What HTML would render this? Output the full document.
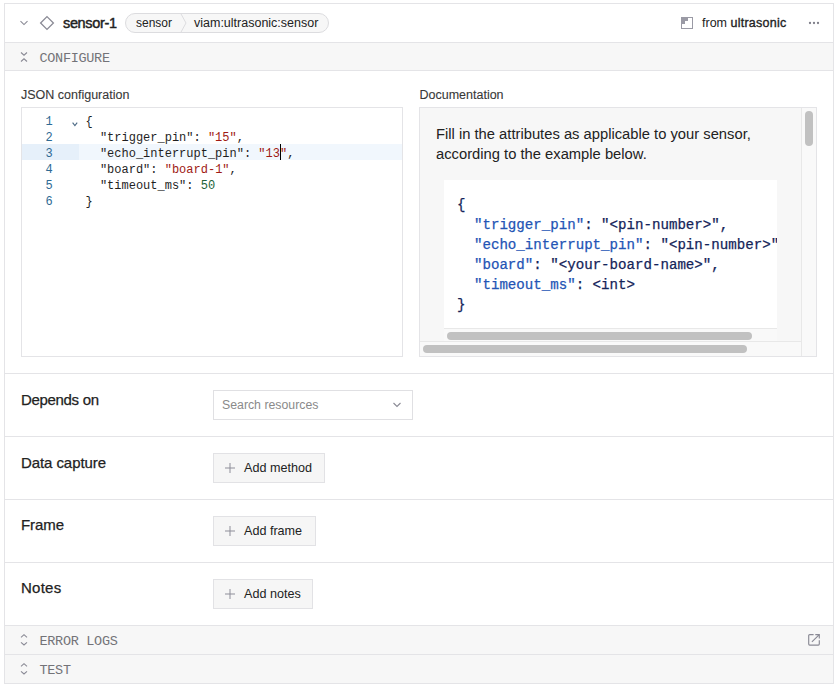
<!DOCTYPE html>
<html><head><meta charset="utf-8">
<style>
*{box-sizing:border-box;margin:0;padding:0}
html,body{width:839px;height:687px;background:#fff;overflow:hidden}
body{position:relative;font-family:"Liberation Sans",sans-serif;color:#1f1f1f}
.abs{position:absolute}
.frame{position:absolute;left:4px;top:3px;width:830px;height:681px;border:1px solid #e4e4e7;background:#fff}
.hline{position:absolute;left:4px;width:830px;height:1px;background:#e4e4e7}
.bar{position:absolute;left:5px;width:828px;background:#f7f7f7}
.mono{font-family:"Liberation Mono",monospace}
.t{position:absolute;white-space:pre;line-height:1}
.barlabel{position:absolute;left:39.5px;font-family:"Liberation Mono",monospace;font-size:13.5px;color:#737378;letter-spacing:-0.3px;white-space:pre;line-height:1}
.btn{position:absolute;left:213px;height:30px;border:1px solid #e2e2e5;background:#f6f6f6}
.sect{position:absolute;left:21px;font-size:15px;-webkit-text-stroke:0.25px #222;color:#222;white-space:pre;line-height:1}
.lbl{position:absolute;font-size:12.5px;color:#383838;-webkit-text-stroke:0.1px #383838;white-space:pre;line-height:1}
.ed{position:absolute;left:21px;top:107px;width:382px;height:250px;border:1px solid #e4e4e7;background:#fff;overflow:hidden}
.ln{position:absolute;left:0;width:30.7px;text-align:right;font-family:"Liberation Mono",monospace;font-size:12px;color:#2e6a94;line-height:16px}
.code{position:absolute;left:63.5px;font-family:"Liberation Mono",monospace;font-size:12px;color:#1f1f1f;line-height:16px;white-space:pre}
.s{color:#a01a14}
.n{color:#22633a}
.doc{position:absolute;left:419px;top:107px;width:398px;height:250px;border:1px solid #e4e4e7;background:#f7f7f7;overflow:hidden}
.dcode{font-family:"Liberation Mono",monospace;font-size:14.13px;line-height:20px;white-space:pre;color:#142459;-webkit-text-stroke:0.25px currentColor}
.k{color:#2354b5}
</style></head>
<body>
<div class="frame"></div>
<!-- header -->
<div class="hline" style="top:42px"></div>
<div class="bar" style="top:43px;height:27px"></div>
<div class="hline" style="top:70px"></div>

<!-- header content -->
<svg class="abs" style="left:19px;top:19px" width="10" height="8" viewBox="0 0 10 8"><path d="M1.5 2.2 L5 5.6 L8.5 2.2" fill="none" stroke="#8a8a95" stroke-width="1.1"/></svg>
<svg class="abs" style="left:39px;top:15px" width="16" height="16" viewBox="0 0 16 16"><path d="M8 1.6 L14.4 8 L8 14.4 L1.6 8 Z" fill="none" stroke="#8a8a95" stroke-width="1.3"/></svg>
<div class="t" style="left:63px;top:16px;font-size:14.5px;color:#222;-webkit-text-stroke:0.45px #222;letter-spacing:-0.35px">sensor-1</div>

<div class="abs" style="left:125px;top:13px;width:204px;height:20px;border:1px solid #dcdcdf;border-radius:10px;background:#f7f7f7"></div>
<svg class="abs" style="left:180px;top:13px" width="8" height="20" viewBox="0 0 8 20"><path d="M0.5 0 L6 10 L0.5 20" fill="none" stroke="#dcdcdf" stroke-width="1"/></svg>
<div class="t" style="left:136px;top:17px;font-size:12px;color:#222">sensor</div>
<div class="t" style="left:194px;top:17px;font-size:12.5px;color:#222">viam:ultrasonic:sensor</div>

<svg class="abs" style="left:681px;top:17px" width="12" height="12" viewBox="0 0 12 12"><rect x="0.5" y="0.5" width="11" height="11" fill="#fff" stroke="#9a9aa5" stroke-width="1"/><path d="M1 1 H7 V4 H4 V7 H1 Z" fill="#9a9aa5"/></svg>
<div class="t" style="left:702px;top:17px;font-size:12.5px;color:#222">from <span style="-webkit-text-stroke:0.35px #222;letter-spacing:0.25px">ultrasonic</span></div>
<svg class="abs" style="left:808px;top:21px" width="12" height="4" viewBox="0 0 12 4"><circle cx="2" cy="2" r="1.15" fill="#80808b"/><circle cx="6" cy="2" r="1.15" fill="#80808b"/><circle cx="10" cy="2" r="1.15" fill="#80808b"/></svg>

<!-- CONFIGURE bar -->
<svg class="abs" style="left:19px;top:51px" width="10" height="12" viewBox="0 0 10 12"><path d="M2 1.5 L5 4.2 L8 1.5 M2 10.5 L5 7.8 L8 10.5" fill="none" stroke="#8a8a95" stroke-width="1.1"/></svg>
<div class="barlabel" style="top:52px">CONFIGURE</div>

<div class="lbl" style="left:21px;top:89px">JSON configuration</div>
<div class="lbl" style="left:419.5px;top:89px">Documentation</div>

<!-- editor -->
<div class="ed">
  <div class="abs" style="left:0;top:36px;width:57px;height:16px;background:#e6f0fa"></div>
  <div class="abs" style="left:57px;top:36px;width:323px;height:16px;background:#f1f7fd"></div>
  <div class="ln" style="top:6px">1<br>2<br>3<br>4<br>5<br>6</div>
  <svg class="abs" style="left:49px;top:13px" width="8" height="6" viewBox="0 0 8 6"><path d="M1.6 1.6 L3.9 4.6 L6.2 1.6" fill="none" stroke="#4d6b86" stroke-width="1.1"/></svg>
  <div class="code" style="top:6px">{
  "trigger_pin": <span class="s">"15"</span>,
  "echo_interrupt_pin": <span class="s">"13"</span>,
  "board": <span class="s">"board-1"</span>,
  "timeout_ms": <span class="n">50</span>
}</div>
  <div class="abs" style="left:257.5px;top:36px;width:1.5px;height:16px;background:#000"></div>
</div>

<!-- documentation -->
<div class="doc">
  <div class="t" style="left:16px;top:16px;font-size:14.75px;line-height:20px;color:#222">Fill in the attributes as applicable to your sensor,
according to the example below.</div>
  <div class="abs" style="left:24px;top:72px;width:333px;height:148px;background:#fff;overflow:hidden">
    <div class="dcode abs" style="left:13px;top:15px">{
  <span class="k">"trigger_pin"</span>: "&lt;pin-number&gt;",
  <span class="k">"echo_interrupt_pin"</span>: "&lt;pin-number&gt;",
  <span class="k">"board"</span>: "&lt;your-board-name&gt;",
  <span class="k">"timeout_ms"</span>: &lt;int&gt;
}</div>
  </div>
  <!-- inner hscroll -->
  <div class="abs" style="left:24px;top:220px;width:333px;height:13px;background:#f9f9f9;border-top:1px solid #e8e8e8"></div>
  <div class="abs" style="left:27px;top:224px;width:305px;height:8px;border-radius:4px;background:#c1c1c1"></div>
  <!-- vscroll -->
  <div class="abs" style="left:381px;top:0;width:15px;height:248px;background:#f9f9f9;border-left:1px solid #e8e8e8"></div>
  <div class="abs" style="left:385px;top:3px;width:8px;height:35px;border-radius:4px;background:#c1c1c1"></div>
  <!-- outer hscroll -->
  <div class="abs" style="left:0;top:233px;width:381px;height:15px;background:#f9f9f9;border-top:1px solid #e8e8e8"></div>
  <div class="abs" style="left:3px;top:237px;width:324px;height:8px;border-radius:4px;background:#c1c1c1"></div>
</div>

<!-- sections -->
<div class="hline" style="top:373px"></div>
<div class="sect" style="top:392px;letter-spacing:-0.32px">Depends on</div>
<div class="abs" style="left:213px;top:390px;width:200px;height:30px;border:1px solid #e0e0e3;background:#fff"></div>
<div class="t" style="left:222px;top:399px;font-size:12.3px;color:#8a8a8a">Search resources</div>
<svg class="abs" style="left:392px;top:401px" width="10" height="8" viewBox="0 0 10 8"><path d="M1.5 2 L5 5.5 L8.5 2" fill="none" stroke="#8a8a95" stroke-width="1.1"/></svg>

<div class="hline" style="top:436px"></div>
<div class="sect" style="top:455px;letter-spacing:-0.08px">Data capture</div>
<div class="btn" style="top:453px;width:112px"></div>
<svg class="abs" style="left:225px;top:463px" width="10" height="10" viewBox="0 0 10 10"><path d="M5 0 V10 M0 5 H10" stroke="#8e8e99" stroke-width="1"/></svg>
<div class="t" style="left:244px;top:462px;font-size:12.6px;color:#222">Add method</div>

<div class="hline" style="top:499px"></div>
<div class="sect" style="top:517px;letter-spacing:-0.07px">Frame</div>
<div class="btn" style="top:516px;width:103px"></div>
<svg class="abs" style="left:225px;top:526px" width="10" height="10" viewBox="0 0 10 10"><path d="M5 0 V10 M0 5 H10" stroke="#8e8e99" stroke-width="1"/></svg>
<div class="t" style="left:244px;top:525px;font-size:12.6px;color:#222">Add frame</div>

<div class="hline" style="top:562px"></div>
<div class="sect" style="top:580px;letter-spacing:0.25px">Notes</div>
<div class="btn" style="top:579px;width:100px"></div>
<svg class="abs" style="left:225px;top:589px" width="10" height="10" viewBox="0 0 10 10"><path d="M5 0 V10 M0 5 H10" stroke="#8e8e99" stroke-width="1"/></svg>
<div class="t" style="left:244px;top:588px;font-size:12.6px;color:#222">Add notes</div>

<!-- bottom bars -->
<div class="hline" style="top:625px"></div>
<div class="bar" style="top:626px;height:28px"></div>
<svg class="abs" style="left:19px;top:633px" width="10" height="14" viewBox="0 0 10 14"><path d="M2 4.3 L5 1.7 L8 4.3 M2 9.3 L5 12 L8 9.3" fill="none" stroke="#8a8a95" stroke-width="1.1"/></svg>
<div class="barlabel" style="top:634.5px">ERROR LOGS</div>
<svg class="abs" style="left:808px;top:634px" width="12" height="12" viewBox="0 0 12 12"><path d="M5.6 0.6 H1.7 Q0.7 0.6 0.7 1.6 V10.1 Q0.7 11.1 1.7 11.1 H10.3 Q11.3 11.1 11.3 10.1 V6.2 M7.3 0.6 H11.3 V4.4 M11.3 0.6 L3.9 7.9" fill="none" stroke="#8a8a95" stroke-width="1.15"/></svg>
<div class="hline" style="top:654px"></div>
<div class="bar" style="top:655px;height:28px"></div>
<svg class="abs" style="left:19px;top:662px" width="10" height="14" viewBox="0 0 10 14"><path d="M2 4.3 L5 1.7 L8 4.3 M2 9.3 L5 12 L8 9.3" fill="none" stroke="#8a8a95" stroke-width="1.1"/></svg>
<div class="barlabel" style="top:663.5px">TEST</div>
</body></html>
